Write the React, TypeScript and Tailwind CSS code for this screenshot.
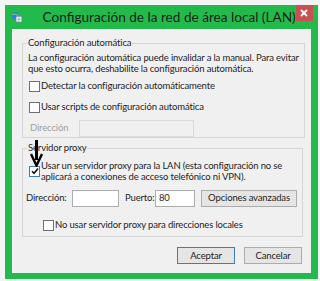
import React from 'react';

const font = { fontFamily: 'Lato, "Noto Sans", sans-serif' };

const Check = ({ checked, focused }: { checked?: boolean; focused?: boolean }) => (
  <span
    className={`flex h-[11px] w-[11px] shrink-0 items-center justify-center border bg-white ${
      focused ? 'border-[#3c7fb1]' : 'border-[#707070]'
    }`}
  >
    {checked && (
      <svg width="8" height="8" viewBox="0 0 8 8">
        <path d="M1 4.2 L3 6.2 L7 1.5" fill="none" stroke="#111" strokeWidth="1.6" />
      </svg>
    )}
  </span>
);

const Group = ({ title, className, children }: { title: string; className?: string; children: React.ReactNode }) => (
  <fieldset className={`border border-[#d5d5d5] ${className ?? ''}`}>
    <legend className="ml-[4px] px-[1px] leading-[12px] text-[#1e1e1e]">{title}</legend>
    {children}
  </fieldset>
);

export default function App() {
  return (
    <div className="h-[281px] w-[320px] overflow-hidden bg-[#f4f4f4] pl-[5px] pt-[5px] text-[9.5px] tracking-[-0.15px] text-[#1e1e1e] whitespace-nowrap" style={font}>
      <div className="relative flex h-[274px] w-[313px] flex-col bg-[#22bb4b] px-[7px] pb-[6px]">
        {/* Title bar */}
        <div className="flex h-[24px] items-center">
          <svg width="16" height="16" viewBox="0 0 16 16" className="ml-[-1px] mt-[-1px]">
            <circle cx="6" cy="6" r="5" fill="#2f7fd6" />
            <path d="M2 5 C4 3 7 4 10 6" stroke="#8fd16a" strokeWidth="1.5" fill="none" />
            <rect x="7" y="7" width="8" height="8" fill="#fff" stroke="#5b7fa5" strokeWidth="0.8" />
            <path d="M9 9.5 H13 M9 11.5 H13 M9 13.5 H12" stroke="#3a6db0" strokeWidth="0.8" />
          </svg>
          <span className="ml-[20px] mt-[2px] text-[13.6px] leading-none tracking-normal text-[#1b1b1b]">
            Configuración de la red de área local (LAN)
          </span>
          <div className="ml-auto mr-[-2px] mt-[-8px] flex h-[16px] w-[24px] items-center justify-center bg-[#c75050]">
            <svg width="8" height="8" viewBox="0 0 8 8">
              <path d="M1 1 L7 7 M7 1 L1 7" stroke="#fff" strokeWidth="1.8" />
            </svg>
          </div>
        </div>

        {/* Client area */}
        <div className="relative flex flex-1 flex-col border-l border-t border-white bg-[#f0f0f0] px-[9px] pt-[7px]">
          <Group title="Configuración automática" className="h-[101px]">
            <div className="px-[5px] pt-[3px]">
              <p className="leading-[11px]">
                La configuración automática puede invalidar a la manual. Para evitar
                <br />
                que esto ocurra, deshabilite la configuración automática.
              </p>
              <label className="ml-[1px] mt-[5px] flex items-center gap-[1px]">
                <Check />
                <span>Detectar la configuración automáticamente</span>
              </label>
              <label className="ml-[1px] mt-[7px] flex items-center gap-[1px]">
                <Check />
                <span>Usar scripts de configuración automática</span>
              </label>
              <div className="mt-[5px] flex items-center">
                <span className="w-[51px] pl-[2px] text-[#a0a0a0]">Dirección</span>
                <span className="h-[17px] w-[115px] border border-[#dadada] bg-[#f0f0f0]" />
              </div>
            </div>
          </Group>

          <Group title="Servidor proxy" className="mt-[4px] h-[95px]">
            <div className="px-[5px] pt-[6px]">
              <div className="ml-[1px] flex items-center gap-[1px]">
                <Check checked focused />
                <span className="leading-[11px]">
                  Usar un servidor proxy para la LAN (esta configuración no se
                  <br />
                  aplicará a conexiones de acceso telefónico ni VPN).
                </span>
              </div>
              <div className="ml-[-2px] mt-[8px] flex items-center">
                <span className="w-[46px]">Dirección:</span>
                <span className="h-[17px] w-[47px] border border-[#abadb3] bg-white" />
                <span className="ml-[6px] w-[30px]">Puerto:</span>
                <span className="flex h-[17px] w-[40px] items-center border border-[#abadb3] bg-white pl-[3px]">80</span>
                <button className="ml-[6px] mt-[-1px] h-[17px] w-[96px] border border-[#acacac] bg-[#e5e5e5] leading-none">
                  Opciones avanzadas
                </button>
              </div>
              <label className="ml-[15px] mt-[11px] flex items-center gap-[1px]">
                <Check />
                <span>No usar servidor proxy para direcciones locales</span>
              </label>
            </div>
          </Group>

          <div className="mt-[10px] flex justify-end gap-[9px]">
            <button className="h-[17px] w-[58px] border border-[#3c7fb1] bg-[#e5e5e5] leading-none">Aceptar</button>
            <button className="h-[17px] w-[58px] border border-[#acacac] bg-[#e5e5e5] leading-none">Cancelar</button>
          </div>

          {/* annotation arrow */}
          <svg className="absolute left-[17px] top-[110px]" width="13" height="27" viewBox="0 0 13 27">
            <path d="M6.5 0 V20" stroke="#000" strokeWidth="3" />
            <path d="M1 14 L6.5 25.5 L12 14" stroke="#000" strokeWidth="2.4" fill="none" />
          </svg>
        </div>
      </div>
    </div>
  );
}
